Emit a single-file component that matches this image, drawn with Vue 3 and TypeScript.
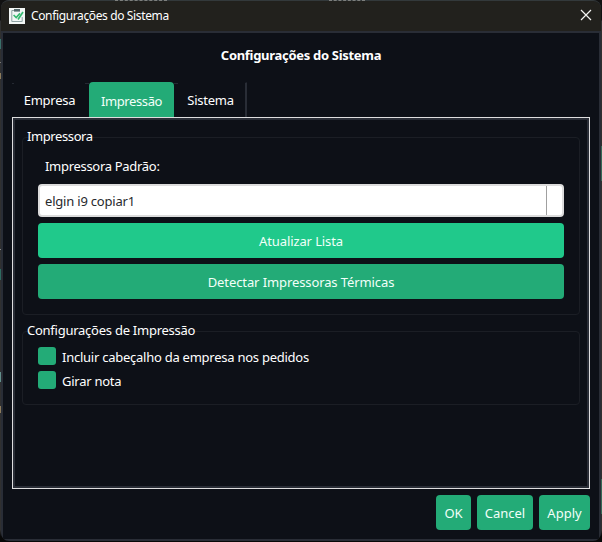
<script setup lang="ts">
import { ref } from 'vue'

const tabs = ['Empresa', 'Impressão', 'Sistema']
const activeTab = ref('Impressão')
const printer = ref('elgin i9 copiar1')
const options = ['Incluir cabeçalho da empresa nos pedidos', 'Girar nota']
</script>

<template>
  <div class="desktop">
    <div class="behind"><i /><i /><i /></div>
    <div class="window">
      <header class="titlebar">
        <svg class="app-icon" width="16" height="16" viewBox="0 0 16 16">
          <rect width="16" height="16" fill="#f3f7f6" />
          <path d="M11 2.5H2.8v11h10.4V9" fill="none" stroke="#8fa3a3" stroke-width="1" />
          <rect x="5" y="1" width="6" height="2.6" fill="#53696c" />
          <path d="M4.6 7l2.6 2.6L11 5.4" fill="none" stroke="#35ba70" stroke-width="1.6" />
          <path d="M9 11.5l5-7.5" stroke="#35ba70" stroke-width="1.7" />
        </svg>
        <span class="caption">Configurações do Sistema</span>
        <svg class="close" width="12" height="12" viewBox="0 0 12 12">
          <path d="M1 1l10 10M11 1L1 11" fill="none" stroke="#f4f4f2" stroke-width="1.2" />
        </svg>
      </header>
      <main class="content">
        <h1>Configurações do Sistema</h1>
        <nav class="tabs">
          <button
            v-for="tab in tabs"
            :key="tab"
            class="tab"
            :class="[tab.toLowerCase().slice(0, 3), { active: tab === activeTab }]"
            @click="activeTab = tab"
          >{{ tab }}</button>
        </nav>
        <section class="panel">
          <div class="panel-inner">
            <div class="group printer">
              <h2 class="first">Impressora</h2>
              <label class="field-label">Impressora Padrão:</label>
              <div class="select"><span>{{ printer }}</span><i /></div>
              <button class="wide bright">Atualizar Lista</button>
              <button class="wide">Detectar Impressoras Térmicas</button>
            </div>
            <div class="group options">
              <h2>Configurações de Impressão</h2>
              <div v-for="option in options" :key="option" class="option">
                <i class="box" /><span>{{ option }}</span>
              </div>
            </div>
          </div>
        </section>
        <footer class="actions">
          <button class="ok">OK</button>
          <button class="cancel">Cancel</button>
          <button class="apply">Apply</button>
        </footer>
      </main>
    </div>
  </div>
</template>

<style>
body { margin: 0; background: #111; overflow: hidden; }
</style>

<style scoped>
* { box-sizing: border-box; }
.desktop {
  position: relative; width: 602px; height: 542px; padding: 0 1px;
  background:
    linear-gradient(#39706a, #39706a) 0 39px / 1px 10px no-repeat,
    linear-gradient(#777, #777) 0 62px / 1px 1px no-repeat,
    linear-gradient(#8d7b5b, #8d7b5b) 0 73px / 1px 6px no-repeat,
    linear-gradient(#888, #888) 0 249px / 1px 1px no-repeat,
    linear-gradient(#2d6b60, #2d6b60) 0 269px / 1px 11px no-repeat,
    linear-gradient(#628f8b, #628f8b) 0 372px / 1px 10px no-repeat,
    linear-gradient(#8d7b5b, #8d7b5b) 0 406px / 1px 7px no-repeat,
    linear-gradient(#376957, #376957) 601px 146px / 1px 35px no-repeat,
    linear-gradient(#376957, #376957) 601px 479px / 1px 35px no-repeat,
    linear-gradient(#111 20px, #303030 21px, #303030 530px, #080808 536px);
  font-family: "Noto Sans", "Open Sans", sans-serif;
  font-size: 13px; line-height: 18px; letter-spacing: -.25px; color: #fff;
}
.behind { position: absolute; z-index: 1; left: 115px; top: 0; display: flex; }
.behind i { height: 1px; width: 52px; border-top: 1px dashed #7d7f7d; }
.behind i:nth-child(2) { width: 162px; border-color: transparent; }
.behind i:nth-child(3) { width: 36px; }
.window {
  height: 541px; display: flex; flex-direction: column;
  border-radius: 8px; overflow: hidden;
  background: #292d36; border-top: 1px solid #33393b;
}
.titlebar {
  height: 30px; flex: none; display: flex; align-items: center;
  padding: 0 9px 0 8px; background: #22211d;
}
.app-icon { flex: none; margin-top: -1px; }
.caption { margin-left: 6px; font-size: 12px; letter-spacing: -.37px; white-space: nowrap; }
.close { margin-left: auto; margin-top: -2px; }
.content {
  margin: 2px 0 0 2px; width: 596px; height: 506px; padding: 0 9px;
  background: #0d1017; display: flex; flex-direction: column;
}
h1 { margin: 0; height: 49px; padding-top: 13px; font-size: 13px; line-height: 18px; letter-spacing: -.3px; text-align: center; font-weight: 700; }
.tabs { height: 35px; display: flex; }
button { font: inherit; letter-spacing: inherit; color: #f2fff9; border: 0; padding: 0; margin: 0; white-space: nowrap; }
.tab { background: transparent; color: #fff; height: 35px; border-top: 1px solid transparent; }
.tab.emp {
  width: 77px; padding-right: 2px;
  background:
    linear-gradient(#252932, #252932) 0 0 / 2px 1px no-repeat,
    linear-gradient(#252932, #252932) 100% 0 / 4px 1px no-repeat;
}
.tab.sis {
  width: 73px; border-right: 2px solid #292d36; border-radius: 0 1px 0 0; padding-left: 2px;
  background: linear-gradient(#252932, #252932) 0 0 / 4px 1px no-repeat;
}
.tab.active { width: 85px; background: #23ab77; border-radius: 4px 4px 0 0; color: #f2fff9; padding-top: 2px; border: 0; letter-spacing: -.4px; }
.panel { height: 372px; width: 578px; border: 1px solid #dededf; }
.panel-inner { height: 370px; border: 2px solid #292d36; padding: 17px 7px; }
.group { position: relative; width: 558px; border: 1px solid #1b1e25; border-radius: 4px; padding: 0 15px; }
.printer { height: 178px; display: flex; flex-direction: column; }
.options { height: 74px; margin-top: 16px; padding-top: 15px; }
h2 { position: absolute; left: 4px; top: -11px; margin: 0; font-size: 13px; line-height: 18px; font-weight: 400; white-space: nowrap; }
h2.first { letter-spacing: -.4px; }
.field-label { padding-left: 7px; height: 46px; padding-top: 19px; letter-spacing: -.3px; }
.select {
  height: 33px; flex: none; display: flex; align-items: center; justify-content: space-between;
  border: 2px solid #dcdcdc; border-radius: 4px; background: #fff; color: #27292d;
  padding: 0 15px 0 5px; letter-spacing: -.2px;
}
.select span { padding-top: 1px; }
.select i { width: 1px; height: 29px; background: #a0a0a0; }
.wide { height: 35px; flex: none; margin-top: 6px; border-radius: 4px; background: #23ab77; padding-top: 1px; letter-spacing: -.1px; }
.wide.bright { background: #20c98b; }
.option { display: flex; height: 18px; margin-bottom: 6px; white-space: nowrap; }
.box { width: 18px; height: 18px; border-radius: 3px; background: #23ab77; }
.option span { margin-left: 6px; padding-top: 1px; }
.actions { display: flex; justify-content: flex-end; gap: 6px; padding-top: 6px; letter-spacing: 0; }
.actions button { height: 35px; border-radius: 4px; background: #23ab77; padding-top: 1px; }
.ok { width: 35px; }
.cancel { width: 56px; }
.apply { width: 51px; }
</style>
